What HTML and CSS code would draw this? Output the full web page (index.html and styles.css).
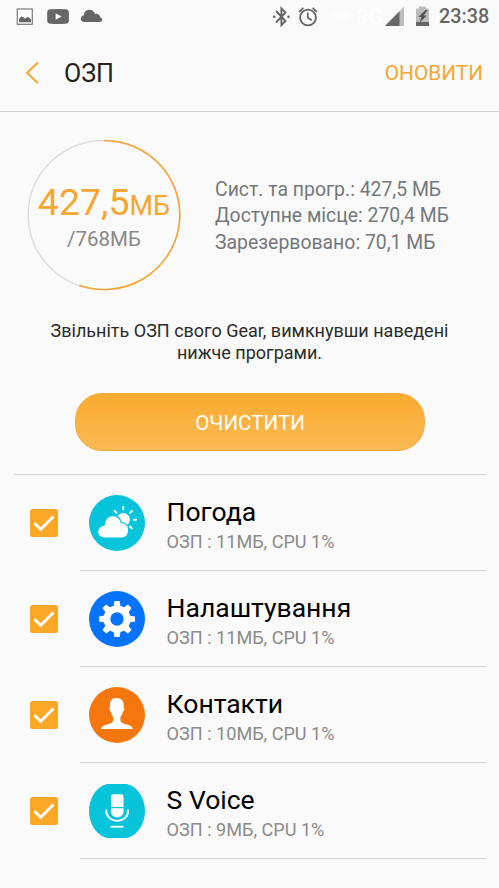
FILE: index.html
```html
<!DOCTYPE html>
<html lang="uk">
<head>
<meta charset="utf-8">
<title>ОЗП</title>
<link rel="stylesheet" href="styles.css">
</head>
<body>
<div class="status">
  <svg class="status-left" width="110" height="34" viewBox="0 0 110 34">
    <rect x="17.3" y="9" width="15" height="15.300" fill="#fff" stroke="#777" stroke-width="1.2"/>
    <path d="M19 22.300v-3.300l2.200-2.500 1.800.4 2.200 1.700 2.300-1.600 1.500.4 2 2v2.900z" fill="#666"/>
    <path d="M50.500 9.200q7.500-.6 15 0 3.300.1 3.400 3.300v8q-.1 3.200-3.400 3.300-7.500.6-15 0-3.200-.1-3.300-3.300v-8q.1-3.200 3.300-3.300z" fill="#666"/>
    <path d="M55.600 13.300v6.400l6-3.200z" fill="#fafafa"/>
    <path d="M84.500 22c-4.800 0-4.800-6.100-.6-6.700C84.500 11 87 9.800 89.500 9.800c3 0 4.700 1.700 5.500 4.100 3-.5 5 1.300 5.200 3.700 2.700.5 2.700 4.400-.6 4.400z" fill="#666"/>
  </svg>
  <div class="status-right">
    <svg width="96" height="34" viewBox="0 0 96 34">
      <g fill="none" stroke="#666" stroke-width="1.900">
        <path d="M4 11l9.500 10-4.100 4.200V8.300l4.100 4.200L4 22.500"/>
        <circle cx="36" cy="17.500" r="7.900"/>
        <path d="M35.800 12.500v5.200l4 2.500M27.100 11.800l4.300-3.800M40.600 8l4.300 3.800" stroke-width="1.700"/>
      </g>
      <circle cx="2.200" cy="16.800" r="1.300" fill="#666"/><circle cx="16.500" cy="16.800" r="1.300" fill="#666"/>
      <path d="M60 14.300q8.500-6.500 17 0L68.500 25z" fill="#fdfdfd"/>
    </svg>
    <span class="net">3G</span>
    <svg width="48" height="34" viewBox="0 0 48 34">
      <path d="M19 26V6.500L0 26z" fill="#bdbdbd"/>
      <path d="M14.500 26V11.300L0 26z" fill="#666"/>
      <path d="M31 8.500h3v-2h7v2h3V26H31z" fill="#bdbdbd"/>
      <path d="M31 22h13v4H31z" fill="#666"/>
      <path d="M40.800 9.700l-7.500 7.300h3.200l-2 5.800 7.300-7.400h-3.200l4-5.200z" fill="#555"/>
    </svg>
    <span class="time">23:38</span>
  </div>
</div>
<header class="bar">
  <svg class="back" width="14" height="24" viewBox="0 0 14 24"><path d="M12.900 1.500L2.100 11.700l10.800 10.500" fill="none" stroke="#f5a632" stroke-width="2"/></svg>
  <h1 class="title">ОЗП</h1>
  <span class="refresh">ОНОВИТИ</span>
</header>
<main>
  <section class="summary">
    <div class="gauge">
      <svg class="ring" width="154" height="152" viewBox="0 0 154 152">
        <ellipse cx="77" cy="76" rx="75.800" ry="74.500" fill="none" stroke="#dedede" stroke-width="1.500"/>
        <path d="M77 1.500A75.800 74.500 0 1 1 52.500 146.500" fill="none" stroke="#f5a632" stroke-width="1.600"/>
      </svg>
      <div class="used">427,5<span class="unit">МБ</span></div>
      <div class="total">/768МБ</div>
    </div>
    <div class="info">
      <div>Сист. та прогр.: 427,5 МБ</div>
      <div>Доступне місце: 270,4 МБ</div>
      <div>Зарезервовано: 70,1 МБ</div>
    </div>
  </section>
  <p class="message">Звільніть ОЗП свого Gear, вимкнувши наведені<br>нижче програми.</p>
  <div class="clear">ОЧИСТИТИ</div>
  <ul class="apps">
    <li class="app">
      <svg class="check" viewBox="0 0 28 28"><rect width="28" height="28" rx="2.500" fill="#fba827"/><path d="M4.500 14.200l6.300 6.100L23.400 7.500" fill="none" stroke="#fff" stroke-width="2.800"/></svg>
      <svg class="icon" viewBox="0 0 56 56"><circle cx="28" cy="28" r="28" fill="#08c4da"/>
        <circle cx="34.200" cy="24.700" r="6.700" fill="#fff"/>
        <path d="M34.200 12v2.500M25.700 16l1.700 1.700M43 15.900l-1.900 1.900M44.800 24.700h2.300M41 31.500l1.900 1.900" stroke="#fff" stroke-width="1.900" stroke-linecap="round"/>
        <path d="M15 43c-8.400-.8-8.400-11.700 0-12.700.8-6 4.200-9.700 8.700-9.700 4.800 0 7.600 3 8.500 7 5.400-.3 7.800 4 7.500 8.200-.2 4.400-3.100 7.200-6.600 7.200z" fill="#fff" stroke="#08c4da" stroke-width="1.200"/>
      </svg>
      <div class="label"><div class="name">Погода</div><div class="meta">ОЗП : 11МБ, CPU 1%</div></div>
    </li>
    <li class="app">
      <svg class="check" viewBox="0 0 28 28"><rect width="28" height="28" rx="2.500" fill="#fba827"/><path d="M4.500 14.200l6.300 6.100L23.400 7.500" fill="none" stroke="#fff" stroke-width="2.800"/></svg>
      <svg class="icon" viewBox="0 0 56 56"><circle cx="28" cy="28" r="28" fill="#0573fd"/>
        <g fill="#fff"><circle cx="28" cy="28" r="13.500"/>
          <path id="tooth" d="M24.400 16l1-6h5.200l1 6v24l-1 6h-5.200l-1-6z"/>
          <use href="#tooth" transform="rotate(45 28 28)"/><use href="#tooth" transform="rotate(90 28 28)"/><use href="#tooth" transform="rotate(135 28 28)"/>
        </g><circle cx="28" cy="28" r="6.700" fill="#0573fd"/>
      </svg>
      <div class="label"><div class="name">Налаштування</div><div class="meta">ОЗП : 11МБ, CPU 1%</div></div>
    </li>
    <li class="app">
      <svg class="check" viewBox="0 0 28 28"><rect width="28" height="28" rx="2.500" fill="#fba827"/><path d="M4.500 14.200l6.300 6.100L23.400 7.500" fill="none" stroke="#fff" stroke-width="2.800"/></svg>
      <svg class="icon" viewBox="0 0 56 56"><circle cx="28" cy="28" r="28" fill="#f6760e"/>
        <path d="M27.500 11c5.300 0 7.800 3.300 7.200 9.500 1.200.5.6 3.300-.8 4.200-.6 2.600-1.700 4-2.500 5.300v3.500c.8 3.300 6.100 3.600 9.300 5 2 .9 2.700 2 3 3.500H12c.3-1.500 1-2.600 3-3.500 3.200-1.400 8.500-1.700 9.300-5V30c-.8-1.300-1.900-2.700-2.500-5.300-1.400-.9-2-3.700-.8-4.200-.6-6.200 1.200-9.500 6.500-9.500z" fill="#fff"/>
      </svg>
      <div class="label"><div class="name">Контакти</div><div class="meta">ОЗП : 10МБ, CPU 1%</div></div>
    </li>
    <li class="app">
      <svg class="check" viewBox="0 0 28 28"><rect width="28" height="28" rx="2.500" fill="#fba827"/><path d="M4.500 14.200l6.300 6.100L23.400 7.500" fill="none" stroke="#fff" stroke-width="2.800"/></svg>
      <svg class="icon" viewBox="0 0 56 56"><path d="M18 1h20C49.500 4 56 16 56 28s-6.500 24-18 27H18C6.500 52 0 40 0 28S6.500 4 18 1z" fill="#08c4da"/>
        <path d="M22 24V13.500q0-2.300 2.300-2.300h7.900q2.300 0 2.300 2.300V24zM22 25.300h12.500v3c0 8-12.500 8-12.500 0z" fill="#fff"/>
        <path d="M17.300 26.500v1.800c0 5 4.500 9.500 10.900 9.500s10.900-4.500 10.900-9.500v-1.800" fill="none" stroke="#fff" stroke-width="1.700"/>
        <path d="M21.500 43.700h13" stroke="#fff" stroke-width="1.800"/>
      </svg>
      <div class="label"><div class="name">S Voice</div><div class="meta">ОЗП : 9МБ, CPU 1%</div></div>
    </li>
  </ul>
</main>
</body>
</html>
```
FILE: styles.css
```css
* { box-sizing: border-box; }
body { margin: 0; width: 499px; height: 888px; overflow: hidden; background: #fafafa; font-family: Roboto, "Liberation Sans", sans-serif; white-space: nowrap; }
svg { display: block; flex: none; }
.status { display: flex; justify-content: space-between; height: 34px; }
.status-right { display: flex; width: 227px; color: #666; line-height: 34px; }
.net { width: 27px; margin-left: -11px; font-size: 21px; color: #fff; }
.time { margin-left: 6px; font-size: 19.800px; font-weight: 500; }
.status-right svg + .net + svg { margin-left: 1px; }
.bar { display: flex; align-items: center; height: 78px; padding: 0 16px 0 25px; border-bottom: 1px solid #d2d2d2; }
.title { margin: 1px 0 0 25px; font-size: 25px; font-weight: 400; color: #222; }
.refresh { margin-left: auto; font-size: 20.800px; color: #f5a632; }
.summary { display: flex; padding: 27px 0 0 27px; height: 206px; }
.gauge { width: 154px; height: 152px; display: grid; grid-template-rows: 88px 24px; text-align: center; position: relative; }
.ring { position: absolute; inset: 0; }
.used { padding-top: 38px; font-size: 37.500px; line-height: 50px; color: #f5a632; }
.unit { font-size: 27px; }
.total { font-size: 20.500px; line-height: 25px; color: #888; }
.info { margin-left: 34px; padding-top: 37.500px; font-size: 19.420px; line-height: 26.500px; color: #75787a; }
.message { margin: 0; padding-top: 2px; height: 75px; text-align: center; font-size: 18px; line-height: 21.700px; color: #2b2b2b; }
.clear { width: 350px; height: 58px; margin: 0 auto 0 75px; border-radius: 27px; border: 1px solid #f1aa40; background: linear-gradient(#fcab30, #f9b953); color: #fff; font-size: 20.600px; line-height: 58px; text-align: center; }
.apps { list-style: none; margin: 22.500px 13px 0 14px; padding: 0; border-top: 1px solid #d9d9d9; }
.app { display: flex; align-items: center; height: 96.200px; padding-left: 16.300px; background: linear-gradient(#d9d9d9, #d9d9d9) 66px 100% / 406px 1px no-repeat; }
.check { width: 28px; height: 28px; }
.icon { width: 56px; height: 56px; margin-left: 30.300px; }
.label { margin-left: 22px; padding-top: 4px; }
.name { font-size: 26.500px; line-height: 32px; color: #000; }
.meta { font-size: 18.100px; line-height: 24px; color: #8a8a8a; margin-top: 2px; }
```
